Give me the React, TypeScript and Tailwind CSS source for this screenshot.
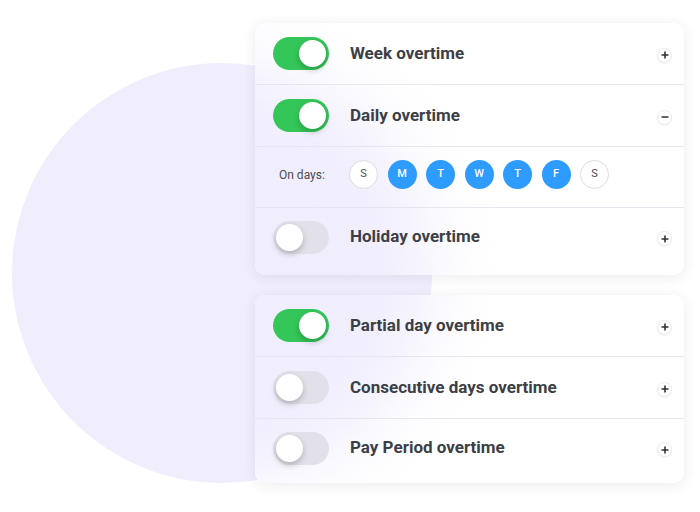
const days = [
  { label: "S", on: false },
  { label: "M", on: true },
  { label: "T", on: true },
  { label: "W", on: true },
  { label: "T", on: true },
  { label: "F", on: true },
  { label: "S", on: false },
];

function Toggle({ on }: { on: boolean }) {
  return (
    <div
      className={
        on
          ? "flex h-[33px] w-[56px] items-center justify-end rounded-full bg-[#34c659] px-[3px]"
          : "flex h-[33px] w-[56px] items-center justify-start rounded-full bg-[#e2e1ea] px-[3px]"
      }
    >
      <div className="h-[27px] w-[27px] rounded-full bg-white shadow-[0_3px_6px_rgba(0,0,0,0.22)]" />
    </div>
  );
}

function Sign({ minus }: { minus?: boolean }) {
  return (
    <div className="flex h-[15px] w-[15px] items-center justify-center rounded-full border border-[#ebebf0] bg-white shadow-[0_1px_2px_rgba(0,0,0,0.05)]">
      <svg width="8" height="8" viewBox="0 0 8 8">
        <path d="M0.5 4h7" stroke="#2f3136" strokeWidth="1.6" />
        {!minus && <path d="M4 0.5v7" stroke="#2f3136" strokeWidth="1.6" />}
      </svg>
    </div>
  );
}

function Row({ on, label, minus, last }: { on: boolean; label: string; minus?: boolean; last?: boolean }) {
  return (
    <div className={last ? "relative flex h-[58px] items-center pl-[18px] pr-[12px]" : "relative flex h-[62px] items-center border-b border-[#e7e6ee] pl-[18px] pr-[12px]"}>
      <Toggle on={on} />
      <div className="ml-[21px] flex-1 text-[17px] font-bold text-[#3c3f46]">{label}</div>
      <div className="mt-[3px]">
        <Sign minus={minus} />
      </div>
    </div>
  );
}

export default function App() {
  return (
    <div className="relative h-[512px] w-[700px] overflow-hidden bg-white font-['Roboto',sans-serif]">
      <div className="absolute left-[12px] top-[63px] h-[420px] w-[420px] rounded-full bg-[#f0eefd]" />
      <div className="relative ml-[255px] flex w-[429px] flex-col gap-[20px] pt-[23px]">
        <div className="relative overflow-hidden rounded-[10px] bg-white pb-[9px] shadow-[0_2px_14px_rgba(40,40,70,0.09)]">
          {/* soft tint of the circle seen through the frosted card */}
          <div className="absolute left-[-243px] top-[40px] h-[420px] w-[420px] rounded-full bg-[#f0eefd] blur-[35px]" />
          <Row on label="Week overtime" />
          <Row on label="Daily overtime" minus />
          <div className="relative flex h-[61px] items-center border-b border-[#e7e6ee] pb-[5px] pl-[24px]">
            <div className="w-[70px] text-[12px] text-[#4a4c52]">On days:</div>
            <div className="flex gap-[9.5px]">
              {days.map((d, i) => (
                <div
                  key={i}
                  className={
                    d.on
                      ? "flex h-[29px] w-[29px] items-center justify-center rounded-full bg-[#2e9bff] text-[11px] font-medium text-white"
                      : "flex h-[29px] w-[29px] items-center justify-center rounded-full border border-[#dcdce2] bg-white text-[11px] text-[#4a4c52]"
                  }
                >
                  {d.label}
                </div>
              ))}
            </div>
          </div>
          <Row on={false} label="Holiday overtime" last />
        </div>
        <div className="relative overflow-hidden rounded-[10px] bg-white pb-[6px] shadow-[0_2px_14px_rgba(40,40,70,0.09)]">
          <div className="absolute left-[-243px] top-[-232px] h-[420px] w-[420px] rounded-full bg-[#f0eefd] blur-[35px]" />
          <Row on label="Partial day overtime" />
          <Row on={false} label="Consecutive days overtime" />
          <Row on={false} label="Pay Period overtime" last />
        </div>
      </div>
    </div>
  );
}
